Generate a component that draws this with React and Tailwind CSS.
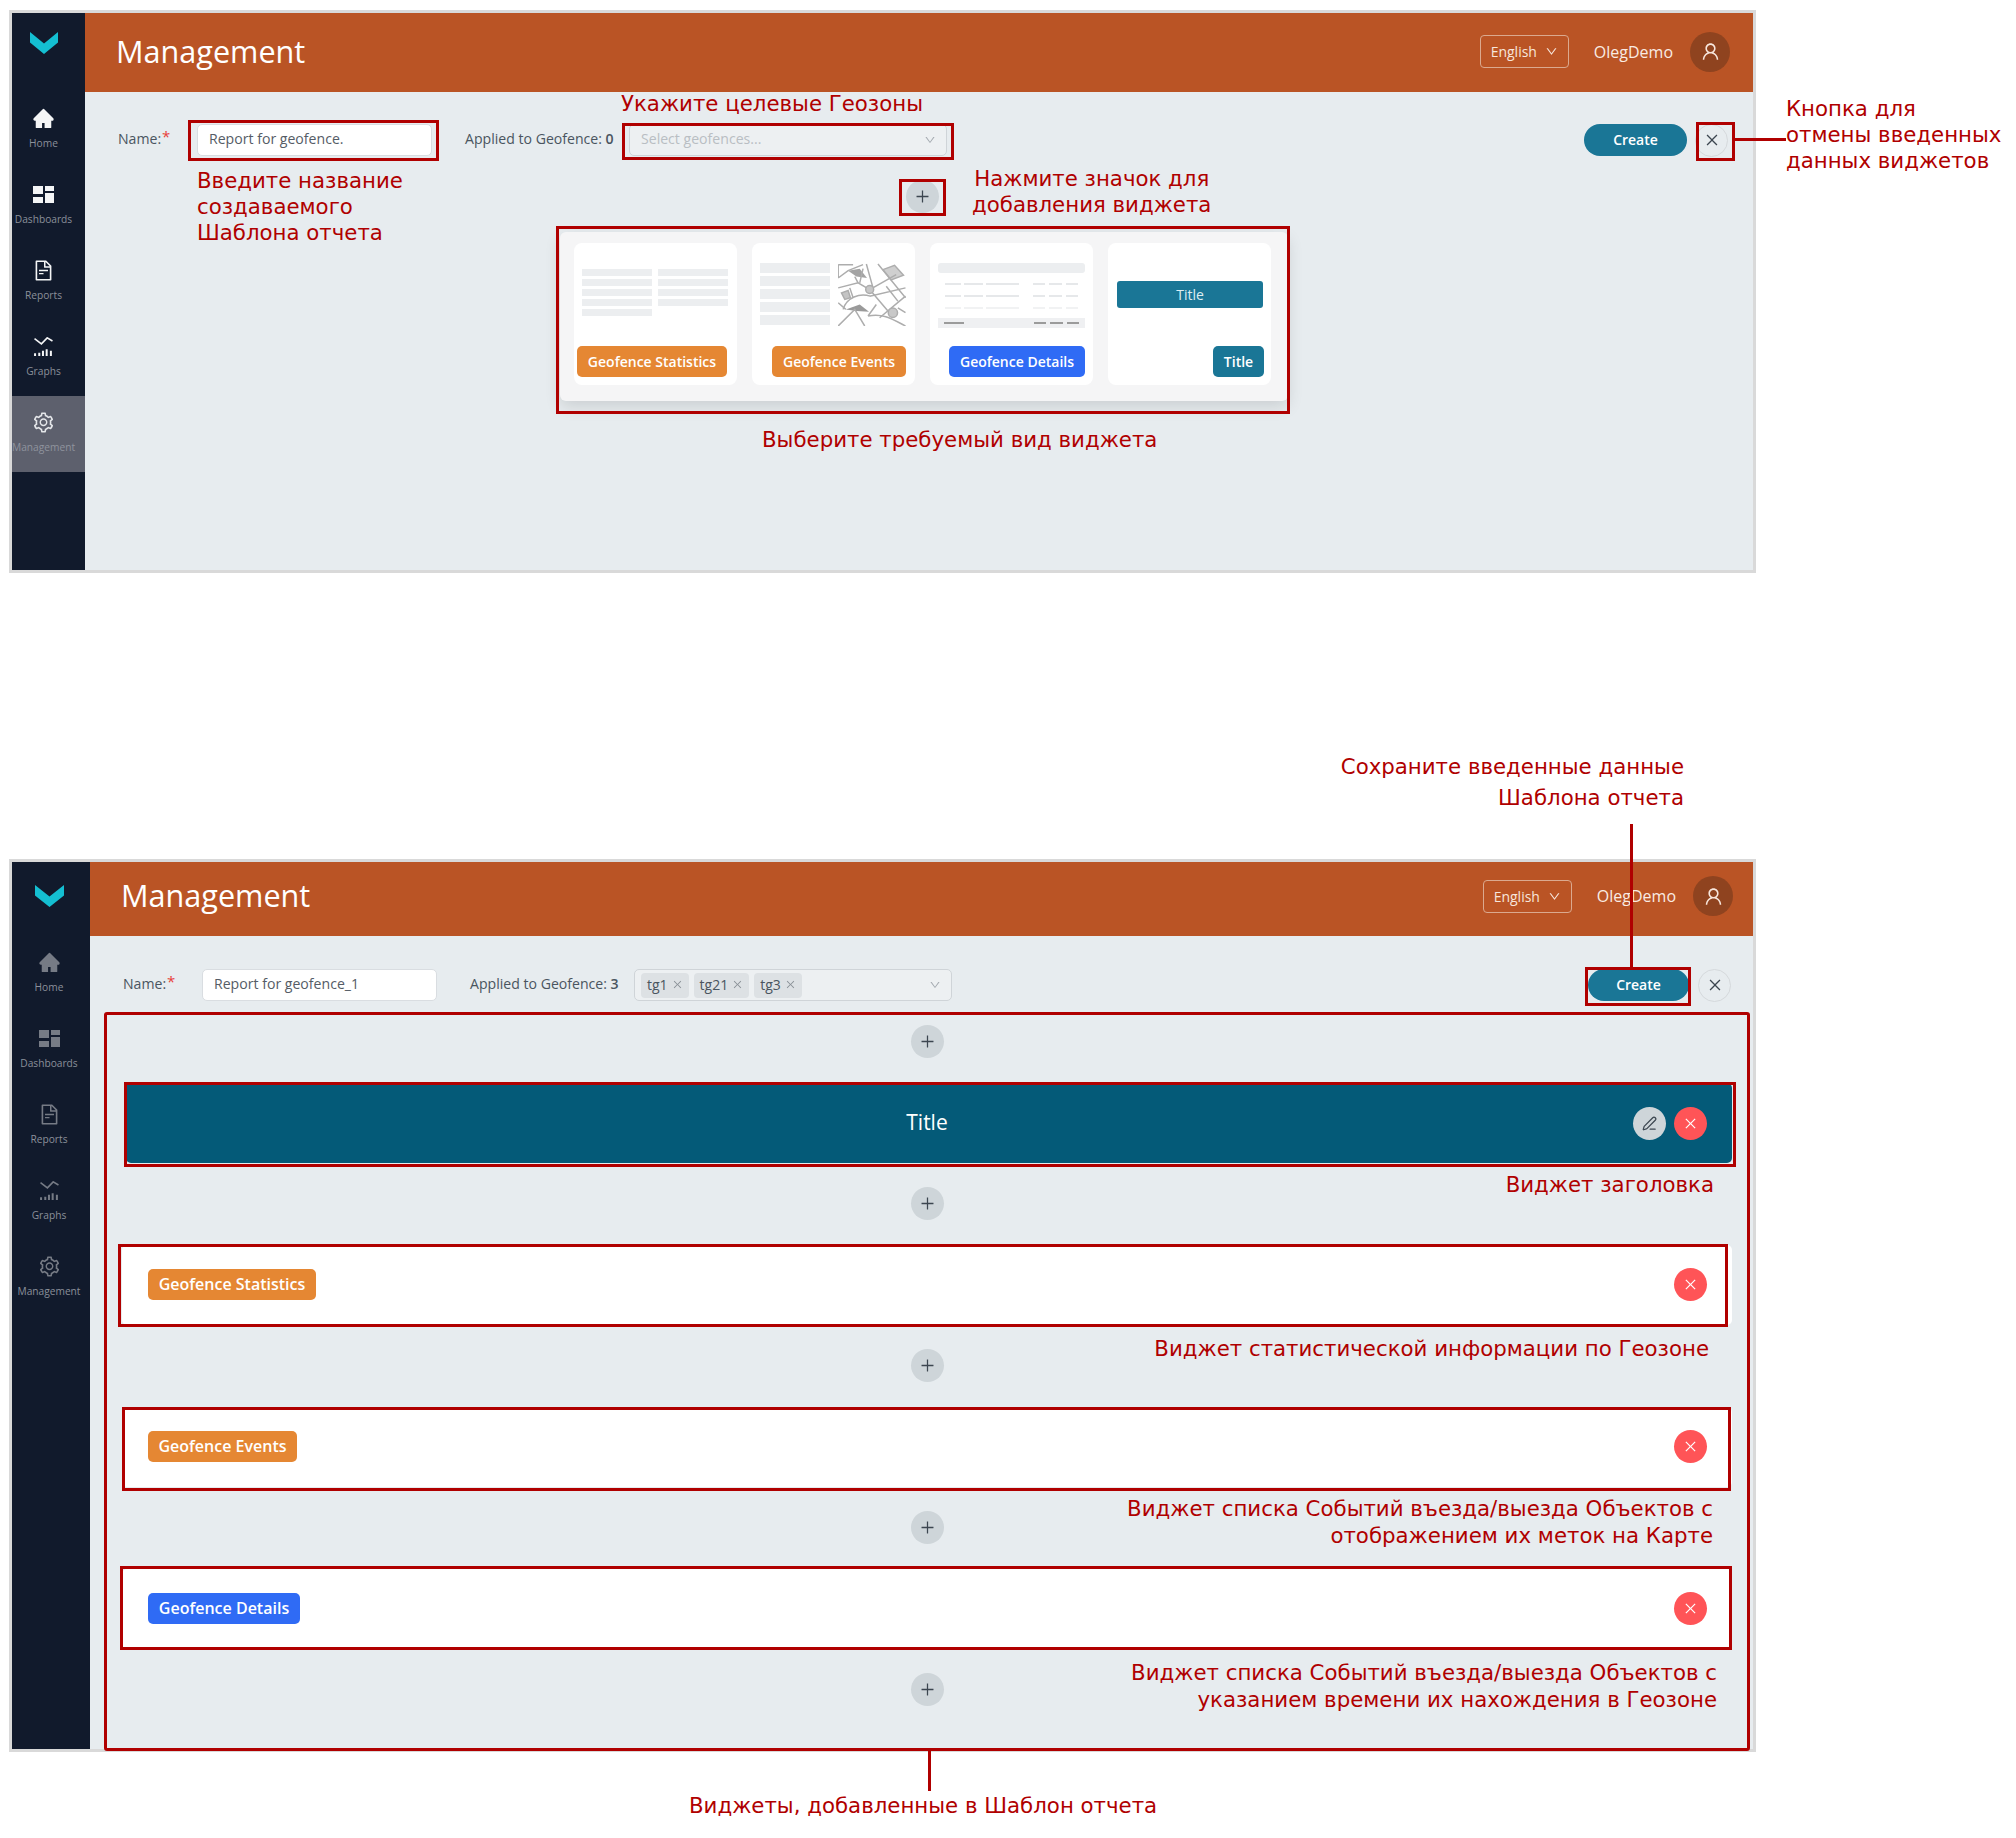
import React from 'react';
import { AiFillHome, AiOutlineFileText, AiOutlineSetting, AiOutlineClose, AiOutlineDown, AiOutlinePlus, AiOutlineUser } from 'react-icons/ai';
import { PenLine } from 'lucide-react';

const OPEN = "font-['Open_Sans',sans-serif]";
const NOTE = "absolute font-['DejaVu_Sans',sans-serif] text-[21.3px] leading-[26px] text-[#b00000] whitespace-pre";

const Logo = ({ className }) => (
  <svg viewBox="0 0 28 21" className={className} preserveAspectRatio="none">
    <polygon points="0,0 14,11 28,0 28,10 14,21 0,10" fill="#14bfd2" />
  </svg>
);

const DashIcon = ({ color }) => (
  <svg width="21" height="17" viewBox="0 0 21 17" fill={color}>
    <rect x="0" y="0" width="10" height="8" />
    <rect x="0" y="11" width="10" height="6" />
    <rect x="12" y="0" width="9" height="5" />
    <rect x="12" y="7" width="9" height="10" />
  </svg>
);

const GraphIcon = ({ color }) => (
  <svg width="19" height="19" viewBox="0 0 18 18" fill="none" stroke={color}>
    <polyline points="0.5,1.500 7,6.500 12.500,0.800 17.500,3.800" strokeWidth="1.5" />
    <path d="M1 18v-2.500M5 18v-3M8.500 18v-5M12 18v-6.500M16 18v-5" strokeWidth="1.9" />
  </svg>
);

const NAV = [
  { label: 'Home', icon: (c) => <AiFillHome size={23} color={c} /> },
  { label: 'Dashboards', icon: (c) => <DashIcon color={c} /> },
  { label: 'Reports', icon: (c) => <AiOutlineFileText size={23} color={c} /> },
  { label: 'Graphs', icon: (c) => <GraphIcon color={c} /> },
  { label: 'Management', icon: (c) => <AiOutlineSetting size={23} color={c} /> },
];

const Sidebar = ({ width, head, logo, iconColor, activeItem, shift }) => (
  <div className={`${width} shrink-0 bg-[#111a2c] flex flex-col`}>
    <div className={`${head} flex items-center justify-center ${shift}`}>
      <Logo className={logo} />
    </div>
    {NAV.map((item) => {
      const active = item.label === activeItem;
      return (
        <div key={item.label} className={`h-[76px] flex flex-col items-center pt-[14px] ${shift} ${active ? 'bg-[#5d606d]' : ''}`}>
          <div className="h-[24px] flex items-center justify-center">
            {item.icon(active ? '#e4e6e9' : iconColor)}
          </div>
          <div className={`mt-[6px] text-[10.2px] leading-[14px] ${OPEN} ${active ? 'text-[#8f939d]' : 'text-[#8b909a]'}`}>{item.label}</div>
        </div>
      );
    })}
  </div>
);

const Header = ({ height, pad }) => (
  <div className={`${height} ${pad} shrink-0 bg-[#ba5425] flex items-center text-white ${OPEN}`}>
    <div className="text-[30.6px] flex-1">Management</div>
    <div className="w-[89px] h-[33px] border border-[#dba98f] rounded-[4px] flex items-center justify-center gap-[8px] text-[14px] text-[#f7e6dc]">
      English <AiOutlineDown size={13} />
    </div>
    <div className="ml-[25px] text-[16px] text-[#f9ebe3]">OlegDemo</div>
    <div className="ml-[17px] w-[40px] h-[40px] rounded-full bg-[#8f431f] flex items-center justify-center">
      <AiOutlineUser size={21} color="#f7e6dc" />
    </div>
  </div>
);

const FormRow = ({ name, count, pad, top, children }) => (
  <div className={`${top} h-[32px] flex items-center pl-[33px] ${pad} text-[14.1px] text-[#4a5560] ${OPEN}`}>
    <div className="w-[79px] shrink-0 relative pb-[2px]">
      Name:<span className="text-[#e8413a] text-[15px] absolute top-[-3px] ml-[1px]">*</span>
    </div>
    <div className="w-[235px] h-full bg-white border border-[#d9dde1] rounded-[5px] flex items-center pl-[11px] pb-[2px] text-[#555c66]">{name}</div>
    <div className="ml-[33px] w-[164px] shrink-0 pb-[2px]">Applied to Geofence: <b className="font-semibold">{count}</b></div>
    {children}
  </div>
);

const Select = ({ children }) => (
  <div className="w-[318px] h-full bg-[#edf0f2] border border-[#cfd4d8] rounded-[5px] flex items-center px-[6px]">
    <div className="flex-1 flex items-center gap-[5px] h-full">{children}</div>
    <AiOutlineDown size={12} color="#a4aab0" className="mr-[4px]" />
  </div>
);

const Tag = ({ text }) => (
  <div className="h-[25px] px-[6px] bg-[#dde1e4] rounded-[4px] flex items-center gap-[4px] text-[14px] pb-[1px] text-[#4a5560]">
    {text} <AiOutlineClose size={11} color="#8a9097" />
  </div>
);

const Create = ({ width }) => (
  <div className={`${width} h-[32px] rounded-full bg-[#1a7696] text-white font-semibold text-[14px] pb-[2px] flex items-center justify-center`}>Create</div>
);

const CloseBtn = () => (
  <div className="w-[33px] h-[33px] rounded-full border border-[#d5d9dc] flex items-center justify-center">
    <AiOutlineClose size={16} color="#3c4650" />
  </div>
);

const PlusBtn = () => (
  <div className="w-[33px] h-[33px] rounded-full bg-[#ced5d9] flex items-center justify-center">
    <AiOutlinePlus size={17} color="#3c4650" />
  </div>
);

const Badge = ({ color, width, size, children }) => (
  <div className={`${color} ${width} ${size} h-[31px] rounded-[5px] text-white font-semibold flex items-center justify-center pb-[1px] ${OPEN}`}>{children}</div>
);

const RedX = () => (
  <div className="w-[33px] h-[33px] rounded-full bg-[#ff5457] flex items-center justify-center">
    <AiOutlineClose size={15} color="#ffffff" />
  </div>
);

const Widget = ({ badge, color, width }) => (
  <div className="h-[80px] bg-white rounded-[5px] flex items-center justify-between pl-[26px] pr-[25px] pb-[2px]">
    <Badge color={color} width={width} size="text-[16px]">{badge}</Badge>
    <RedX />
  </div>
);

const Skeleton = ({ rows, height }) => (
  <div className="flex flex-col gap-[3px] w-[70px]">
    {Array.from({ length: rows }).map((_, i) => (
      <div key={i} className={`${height} bg-[#eceef0]`} />
    ))}
  </div>
);

const Dashes = ({ color }) => (
  <div className="flex justify-between px-[7px] h-[2px] mt-[10px]">
    <div className="flex gap-[3px]">
      <div className={`w-[16px] ${color}`} />
      <div className={`w-[19px] ${color}`} />
      <div className={`w-[33px] ${color}`} />
    </div>
    <div className="flex gap-[4px]">
      <div className={`w-[12px] ${color}`} />
      <div className={`w-[13px] ${color}`} />
      <div className={`w-[12px] ${color}`} />
    </div>
  </div>
);

const MapThumb = () => (
  <svg width="68" height="63" viewBox="25 25 204 190" fill="none" stroke="#adadad" strokeWidth="4.5">
    <polygon points="55,48 90,42 112,70 80,66" fill="#a3a3a3" stroke="none" />
    <polygon points="48,165 90,150 118,172 80,170" fill="#9a9a9a" stroke="none" />
    <polygon points="160,45 195,32 222,62 185,76" fill="#cfcfcf" />
    <polygon points="35,115 55,108 62,130 45,135" fill="#c4c4c4" />
    <path d="M25 70L55 48L100 30M25 100L85 85L120 105L200 60M110 28L130 100M145 28L228 130M25 30H70M25 30V70" />
    <path d="M40 165C50 128 90 115 122 125M120 125L228 100M150 190L228 125M120 105L175 170M170 95L205 140M85 85L75 66" />
    <path d="M25 215L75 165L105 215M115 185C160 175 190 195 228 215M60 100L70 130M25 145L48 165M90 85L100 42M140 150L115 185M205 160L228 175" />
    <circle cx="120" cy="105" r="12" fill="#c8c8c8" />
    <circle cx="190" cy="175" r="14" fill="#c8c8c8" />
  </svg>
);

const Card = ({ children, badge }) => (
  <div className="w-[163px] h-[142px] bg-white rounded-[8px] flex flex-col">
    <div className="h-[103px] pt-[20px]">{children}</div>
    <div className="flex justify-end">{badge}</div>
  </div>
);

const Popover = () => (
  <div className="absolute left-[560px] top-[232px] w-[728px] h-[169px] bg-[#f5f5f6] rounded-[6px] shadow-[0_6px_16px_rgba(0,0,0,0.12)] pl-[14px] pt-[11px] flex gap-[15px]">
    <Card badge={<div className="pr-[10px]"><Badge color="bg-[#e58733]" width="w-[150px]" size="text-[14px]">Geofence Statistics</Badge></div>}>
      <div className="flex gap-[6px] pl-[8px] pt-[6px]">
        <Skeleton rows={5} height="h-[7px]" />
        <Skeleton rows={4} height="h-[7px]" />
      </div>
    </Card>
    <Card badge={<div className="pr-[9px]"><Badge color="bg-[#e58733]" width="w-[134px]" size="text-[14px]">Geofence Events</Badge></div>}>
      <div className="flex gap-[8px] pl-[8px]">
        <Skeleton rows={5} height="h-[10px]" />
        <MapThumb />
      </div>
    </Card>
    <Card badge={<div className="pr-[8px]"><Badge color="bg-[#2f6bf5]" width="w-[136px]" size="text-[14px]">Geofence Details</Badge></div>}>
      <div className="px-[8px]">
        <div className="h-[10px] bg-[#eceef0] rounded-[3px]" />
        <div className="mt-[7px]">
          <Dashes color="bg-[#e6e8ea]" />
          <Dashes color="bg-[#e6e8ea]" />
          <Dashes color="bg-[#f1f2f3]" />
        </div>
        <div className="mt-[9px] h-[10px] bg-[#eff0f2] flex flex-col justify-center">
          <div className="flex justify-between px-[6px] h-[2px]">
            <div className="w-[20px] bg-[#9b9b9b]" />
            <div className="flex gap-[4px]">
              <div className="w-[12px] bg-[#9b9b9b]" />
              <div className="w-[13px] bg-[#9b9b9b]" />
              <div className="w-[12px] bg-[#9b9b9b]" />
            </div>
          </div>
        </div>
      </div>
    </Card>
    <Card badge={<div className="pr-[7px]"><Badge color="bg-[#1a7696]" width="w-[51px]" size="text-[14px]">Title</Badge></div>}>
      <div className="pl-[9px] pr-[8px] pt-[18px]">
        <div className={`h-[27px] bg-[#1a7696] rounded-[3px] text-[#dfeef3] text-[14px] flex items-center justify-center ${OPEN}`}>Title</div>
      </div>
    </Card>
  </div>
);

export default function App() {
  return (
    <div className="relative w-[2016px] h-[1838px] bg-white overflow-hidden">
      {/* first screen */}
      <div className="ml-[9px] pt-[10px]">
        <div className="w-[1747px] h-[563px] border-[3px] border-[#d9d9d9] flex bg-[#e7ecef]">
          <Sidebar width="w-[73px]" head="h-[79px]" logo="w-[28px] h-[22px] mb-[20px]" iconColor="#f4f5f6" activeItem="Management" shift="pr-[10px]" />
          <div className="flex-1 flex flex-col">
            <Header height="h-[79px]" pad="pl-[31px] pr-[23px] pb-[2px]" />
            <FormRow name="Report for geofence." count="0" pad="pr-[25px]" top="mt-[32px]">
              <Select><span className="pl-[5px] pb-[2px] text-[#b9bec3]">Select geofences...</span></Select>
              <div className="flex-1" />
              <Create width="w-[103px]" />
              <div className="ml-[8px]"><CloseBtn /></div>
            </FormRow>
            <div className="mt-[24px] self-start ml-[821px]"><PlusBtn /></div>
          </div>
        </div>
      </div>

      {/* second screen */}
      <div className="ml-[9px] mt-[286px]">
        <div className="w-[1747px] h-[893px] border-[3px] border-[#d9d9d9] flex bg-[#e7ecef]">
          <Sidebar width="w-[78px]" head="h-[74px]" logo="w-[29px] h-[22px] mb-[6px]" iconColor="#767b85" shift="pr-[4px]" />
          <div className="flex-1 flex flex-col">
            <Header height="h-[74px]" pad="pl-[31px] pr-[20px] pb-[6px]" />
            <FormRow name="Report for geofence_1" count="3" pad="pr-[22px]" top="mt-[33px]">
              <Select>
                <Tag text="tg1" />
                <Tag text="tg21" />
                <Tag text="tg3" />
              </Select>
              <div className="flex-1" />
              <Create width="w-[101px]" />
              <div className="ml-[9px]"><CloseBtn /></div>
            </FormRow>
            <div className="flex flex-col pl-[32px] pr-[21px] mt-[24px]">
              <div className="flex justify-center mb-[25px]"><PlusBtn /></div>
              <div className="ml-[4px] h-[80px] bg-[#045a78] rounded-[5px] relative flex items-center justify-center pr-[4px] text-white text-[21px]">
                <span className={OPEN}>Title</span>
                <div className="absolute right-[25px] flex gap-[8px]">
                  <div className="w-[33px] h-[33px] rounded-full bg-[#ced5d9] flex items-center justify-center">
                    <PenLine size={15} color="#3c4650" />
                  </div>
                  <RedX />
                </div>
              </div>
              <div className="flex justify-center mt-[24px] mb-[25px]"><PlusBtn /></div>
              <Widget badge="Geofence Statistics" color="bg-[#e58733]" width="w-[168px]" />
              <div className="flex justify-center mt-[24px] mb-[25px]"><PlusBtn /></div>
              <Widget badge="Geofence Events" color="bg-[#e58733]" width="w-[149px]" />
              <div className="flex justify-center mt-[24px] mb-[25px]"><PlusBtn /></div>
              <Widget badge="Geofence Details" color="bg-[#2f6bf5]" width="w-[152px]" />
              <div className="flex justify-center mt-[24px]"><PlusBtn /></div>
            </div>
          </div>
        </div>
      </div>

      <Popover />

      {/* annotation frames, top */}
      <div className="absolute left-[188px] top-[120px] w-[251px] h-[41px] border-[3px] border-[#b00000]" />
      <div className="absolute left-[622px] top-[123px] w-[332px] h-[37px] border-[3px] border-[#b00000]" />
      <div className="absolute left-[899px] top-[179px] w-[47px] h-[37px] border-[3px] border-[#b00000]" />
      <div className="absolute left-[556px] top-[226px] w-[734px] h-[188px] border-[3px] border-[#b00000]" />
      <div className="absolute left-[1696px] top-[122px] w-[39px] h-[39px] border-[3px] border-[#b00000]" />
      <div className="absolute left-[1734px] top-[138px] w-[52px] h-[3px] bg-[#b00000]" />

      {/* annotation frames, bottom */}
      <div className="absolute left-[1585px] top-[967px] w-[106px] h-[39px] border-[3px] border-[#b00000]" />
      <div className="absolute left-[1630px] top-[824px] w-[3px] h-[144px] bg-[#b00000]" />
      <div className="absolute left-[104px] top-[1012px] w-[1646px] h-[739px] border-[3px] border-[#b00000] rounded-[3px]" />
      <div className="absolute left-[124px] top-[1082px] w-[1612px] h-[85px] border-[3px] border-[#b00000]" />
      <div className="absolute left-[118px] top-[1244px] w-[1610px] h-[83px] border-[3px] border-[#b00000]" />
      <div className="absolute left-[122px] top-[1407px] w-[1609px] h-[84px] border-[3px] border-[#b00000]" />
      <div className="absolute left-[120px] top-[1566px] w-[1612px] h-[84px] border-[3px] border-[#b00000]" />
      <div className="absolute left-[928px] top-[1750px] w-[3px] h-[41px] bg-[#b00000]" />

      {/* annotation notes */}
      <div className={`${NOTE} left-[197px] top-[168px]`}>{'Введите название\nсоздаваемого\nШаблона отчета'}</div>
      <div className={`${NOTE} left-[621px] top-[91px]`}>Укажите целевые Геозоны</div>
      <div className={`${NOTE} left-[972px] top-[166px] text-center`}>{'Нажмите значок для\nдобавления виджета'}</div>
      <div className={`${NOTE} left-[762px] top-[427px]`}>Выберите требуемый вид виджета</div>
      <div className={`${NOTE} left-[1786px] top-[96px]`}>{'Кнопка для\nотмены введенных\nданных виджетов'}</div>
      <div className={`${NOTE} right-[332px] top-[751px] leading-[31px] text-right`}>{'Сохраните введенные данные\nШаблона отчета'}</div>
      <div className={`${NOTE} right-[302px] top-[1172px]`}>Виджет заголовка</div>
      <div className={`${NOTE} right-[307px] top-[1336px]`}>Виджет статистической информации по Геозоне</div>
      <div className={`${NOTE} right-[303px] top-[1495px] leading-[27px] text-right`}>{'Виджет списка Событий въезда/выезда Объектов с\nотображением их меток на Карте'}</div>
      <div className={`${NOTE} right-[299px] top-[1659px] leading-[27px] text-right`}>{'Виджет списка Событий въезда/выезда Объектов с\nуказанием времени их нахождения в Геозоне'}</div>
      <div className={`${NOTE} left-[689px] top-[1793px]`}>Виджеты, добавленные в Шаблон отчета</div>
    </div>
  );
}
